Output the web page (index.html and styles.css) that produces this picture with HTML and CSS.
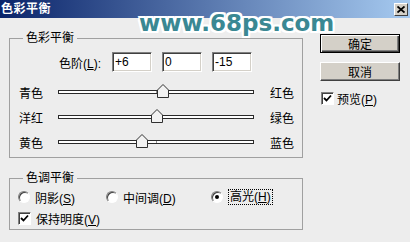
FILE: index.html
```html
<!doctype html>
<html>
<head>
  <meta charset="utf8">
  <title>色彩平衡</title>
  <link rel="stylesheet" href="styles.css">
</head>
<body>
  <div class="titlebar">
    <span class="title">色彩平衡</span>
    <span class="close">
      <svg width="8" height="7" viewBox="0 0 8 7"><path d="M0.5 0.5 L7.5 6.5 M7.5 0.5 L0.5 6.5" stroke="#000" stroke-width="1.8"/></svg>
    </span>
  </div>

  <div class="watermark">www.68ps.com</div>

  <div class="dialog">
    <div class="left">
      <fieldset class="group balance">
        <legend>色彩平衡</legend>
        <div class="levels">
          <label class="levels-label">色阶(<u>L</u>):</label>
          <input class="field" type="text" value="+6">
          <input class="field" type="text" value="0">
          <input class="field" type="text" value="-15">
        </div>

        <!-- sliders: thumb left = 98 + value * 0.98 - 6 -->
        <div class="slider-row first">
          <span class="side">青色</span>
          <div class="track">
            <span class="tick"></span>
            <svg class="thumb" style="left: 97.9px" width="12" height="14" viewBox="0 0 12 14"><polygon points="6,0.5 11.5,6 11.5,13.5 0.5,13.5 0.5,6" fill="#f2f2f2" stroke="#303030"/></svg>
          </div>
          <span class="side-right">红色</span>
        </div>
        <div class="slider-row">
          <span class="side">洋红</span>
          <div class="track">
            <span class="tick"></span>
            <svg class="thumb" style="left: 92px" width="12" height="14" viewBox="0 0 12 14"><polygon points="6,0.5 11.5,6 11.5,13.5 0.5,13.5 0.5,6" fill="#f2f2f2" stroke="#303030"/></svg>
          </div>
          <span class="side-right">绿色</span>
        </div>
        <div class="slider-row">
          <span class="side">黄色</span>
          <div class="track">
            <span class="tick"></span>
            <svg class="thumb" style="left: 77.3px" width="12" height="14" viewBox="0 0 12 14"><polygon points="6,0.5 11.5,6 11.5,13.5 0.5,13.5 0.5,6" fill="#f2f2f2" stroke="#303030"/></svg>
          </div>
          <span class="side-right">蓝色</span>
        </div>
      </fieldset>

      <fieldset class="group tone">
        <legend>色调平衡</legend>
        <div class="radio-row">
          <span class="radio-item shadows"><span class="radio"></span><span>阴影(<u>S</u>)</span></span>
          <span class="radio-item midtones"><span class="radio"></span><span>中间调(<u>D</u>)</span></span>
          <span class="radio-item"><span class="radio checked"></span><span class="focus">高光(<u>H</u>)</span></span>
        </div>
        <div class="check-row">
          <span class="check">
            <svg width="9" height="9" viewBox="0 0 9 9"><path d="M1 4 L3.5 6.5 L8 1.5" stroke="#000" stroke-width="1.8" fill="none"/></svg>
          </span>
          <span>保持明度(<u>V</u>)</span>
        </div>
      </fieldset>
    </div>

    <div class="right">
      <div class="btn default">确定</div>
      <div class="btn">取消</div>
      <div class="check-row preview">
        <span class="check">
          <svg width="9" height="9" viewBox="0 0 9 9"><path d="M1 4 L3.5 6.5 L8 1.5" stroke="#000" stroke-width="1.8" fill="none"/></svg>
        </span>
        <span>预览(<u>P</u>)</span>
      </div>
    </div>
  </div>
</body>
</html>
```

FILE: styles.css
```css
html, body {
  width: 410px;
  height: 242px;
  margin: 0;
  padding: 0;
  overflow: hidden;
  background: #ededed;
  font-family: "Liberation Sans", "Noto Sans CJK SC", sans-serif;
  font-size: 12px;
  color: #000;
}
body {
  position: relative;
}
u {
  text-decoration: underline;
}

/* title bar */
.titlebar {
  height: 18px;
  display: flex;
  align-items: center;
  justify-content: space-between;
  background: linear-gradient(to right, #0a246a, #a6caf0);
}
.title {
  color: #fff;
  font-weight: bold;
  font-size: 12px;
  line-height: 18px;
  padding-left: 1px;
  letter-spacing: 0.5px;
}
.close {
  width: 14px;
  height: 13px;
  margin-right: 2px;
  box-sizing: border-box;
  display: flex;
  align-items: center;
  justify-content: center;
  background: #d4d0c8;
  border: 1px solid;
  border-color: #fff #404040 #404040 #fff;
}

.watermark {
  position: absolute;
  left: 139px;
  top: 10px;
  font-family: "DejaVu Sans", sans-serif;
  font-weight: bold;
  font-size: 23px;
  color: #3a8893;
  text-shadow:
    -2px -2px 0 #fff, 2px -2px 0 #fff, -2px 2px 0 #fff, 2px 2px 0 #fff,
    0 -2px 0 #fff, 0 2px 0 #fff, -2px 0 0 #fff, 2px 0 0 #fff;
  z-index: 5;
}

/* dialog body */
.dialog {
  display: flex;
  padding: 13px 0 0 9px;
}
.left {
  width: 294px;
  flex-shrink: 0;
}
.right {
  margin-left: 17px;
  padding-top: 3px;
}

.group {
  margin: 0;
  min-width: 0;
  box-sizing: border-box;
  width: 294px;
  border: 1px solid #a0a0a0;
}
.group legend {
  padding: 0 3px;
  margin-left: 4px;
  line-height: 14px;
}
.balance {
  padding: 7px 8px 2px 9px;
}
.tone {
  margin-top: 13px;
  padding: 4px 8px 3px 9px;
}

.levels {
  display: flex;
  align-items: center;
  height: 20px;
  padding-left: 40px;
  column-gap: 10px;
}
.levels-label {
  width: 43px;
}
.field {
  width: 40px;
  height: 20px;
  box-sizing: border-box;
  margin: 0;
  padding: 0 2px;
  border: 1px solid;
  border-color: #808080 #fff #fff #808080;
  box-shadow: inset 1px 1px 0 #404040, inset -1px -1px 0 #d4d0c8;
  background: #fff;
  font-family: inherit;
  font-size: 12px;
  outline: none;
}

.slider-row {
  display: flex;
  align-items: center;
  height: 25px;
}
.slider-row.first {
  margin-top: 8px;
}
.side {
  width: 39px;
  flex-shrink: 0;
}
.side-right {
  margin-left: 16px;
  flex-shrink: 0;
}
.track {
  position: relative;
  flex-shrink: 0;
  width: 196px;
  height: 4px;
  box-sizing: border-box;
  margin-top: -1px;
  background: #fff;
  border: 1px solid #2a2a2a;
}
.tick {
  position: absolute;
  left: 97px;
  top: 0;
  width: 1px;
  height: 2px;
  background: #909090;
}
.thumb {
  position: absolute;
  top: -7px;
  display: block;
}

.radio-row {
  display: flex;
  align-items: center;
  height: 16px;
  margin-left: -1px;
}
.radio-item {
  display: flex;
  align-items: center;
  gap: 5px;
}
.shadows {
  width: 88px;
}
.midtones {
  width: 105px;
}
.radio {
  width: 12px;
  height: 12px;
  box-sizing: border-box;
  border-radius: 50%;
  border: 1px solid;
  border-color: #808080 #fff #fff #808080;
  box-shadow: inset 1px 1px 0 #404040;
  background: #fff;
  position: relative;
}
.radio.checked::after {
  content: "";
  position: absolute;
  left: 3px;
  top: 3px;
  width: 4px;
  height: 4px;
  border-radius: 50%;
  background: #000;
}
.focus {
  border: 1px dotted #000;
  padding: 0 1px;
  line-height: 14px;
}

.check-row {
  display: flex;
  align-items: center;
  gap: 5px;
  height: 16px;
  margin-top: 5px;
  margin-left: -1px;
}
.check {
  width: 13px;
  height: 13px;
  box-sizing: border-box;
  display: flex;
  align-items: center;
  justify-content: center;
  border: 1px solid;
  border-color: #808080 #fff #fff #808080;
  box-shadow: inset 1px 1px 0 #404040;
  background: #fff;
}

.btn {
  width: 80px;
  height: 19px;
  box-sizing: border-box;
  display: flex;
  align-items: center;
  justify-content: center;
  background: #d4d0c8;
  border: 1px solid;
  border-color: #fff #404040 #404040 #fff;
  box-shadow: inset -1px -1px 0 #808080;
  margin-bottom: 9px;
}
.btn.default {
  border: 1px solid #000;
  box-shadow: inset 1px 1px 0 #fff, inset -1px -1px 0 #404040, inset -2px -2px 0 #808080;
}
.preview {
  margin-top: 9px;
  margin-left: 1px;
  gap: 3px;
}
```
